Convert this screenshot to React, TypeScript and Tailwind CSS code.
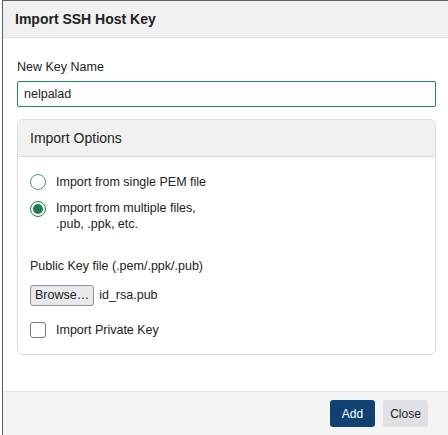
import React from "react";

export default function App() {
  return (
    <div className="w-[448px] h-[435px] bg-white overflow-hidden pl-[2px] font-['Liberation_Sans',Arial,sans-serif] text-[#222]">
      <div className="h-full flex flex-col border-l border-t border-[#5f5f5f]">
        <div className="h-[37px] shrink-0 bg-[#f1f1f1] border-b border-[#dedee4] flex items-center pl-[12px]">
          <span className="text-[14px] font-bold leading-none">Import SSH Host Key</span>
        </div>
        <div className="flex-1 px-[14px] pr-[12px] pt-[22px]">
          <div className="text-[12.5px] leading-[15px]">New Key Name</div>
          <div className="mt-[6px] h-[26px] border border-[#168a52] rounded-[2px] flex items-center pl-[6px] text-[12.5px]">
            nelpalad
          </div>
          <div className="mt-[12px] border border-[#dcdce3] rounded-[6px] overflow-hidden">
            <div className="h-[37px] bg-[#f1f1f1] border-b border-[#dcdce3] flex items-center pl-[12px] text-[14px]">
              Import Options
            </div>
            <div className="pl-[12px] pt-[16px] pb-[16px] text-[12.5px]">
              <div className="flex items-center h-[18px]">
                <span className="w-[16px] h-[16px] rounded-full border border-[#3b9a6c] bg-white shrink-0" />
                <span className="ml-[10px] leading-[16px]">Import from single PEM file</span>
              </div>
              <div className="flex items-start mt-[9px]">
                <span className="mt-[1px] w-[16px] h-[16px] rounded-full border border-[#1d7c52] bg-white shrink-0 flex items-center justify-center">
                  <span className="w-[10px] h-[10px] rounded-full bg-[#1d7c52]" />
                </span>
                <span className="ml-[10px] leading-[16px]">
                  Import from multiple files,
                  <br />
                  .pub, .ppk, etc.
                </span>
              </div>
              <div className="mt-[26px] leading-[16px]">Public Key file (.pem/.ppk/.pub)</div>
              <div className="mt-[11px] flex items-center h-[21px]">
                <span className="h-[21px] px-[4px] border border-[#8f8f9d] rounded-[3px] bg-[#e9e9ed] flex items-center">
                  Browse…
                </span>
                <span className="ml-[5px]">id_rsa.pub</span>
              </div>
              <div className="mt-[16px] flex items-center h-[16px]">
                <span className="w-[16px] h-[16px] rounded-[3px] border border-[#767676] bg-white shrink-0" />
                <span className="ml-[10px]">Import Private Key</span>
              </div>
            </div>
          </div>
        </div>
        <div className="h-[44px] shrink-0 bg-[#f4f4f4] border-t border-[#e2e2e6] flex items-start justify-end pt-[8px] pr-[20px] gap-[8px] text-[12px]">
          <span className="h-[27px] w-[45px] rounded-[3px] bg-[#0f4272] text-white flex items-center justify-center">Add</span>
          <span className="h-[27px] w-[45px] rounded-[3px] bg-[#dfe1e5] text-[#222] flex items-center justify-center">Close</span>
        </div>
      </div>
    </div>
  );
}
